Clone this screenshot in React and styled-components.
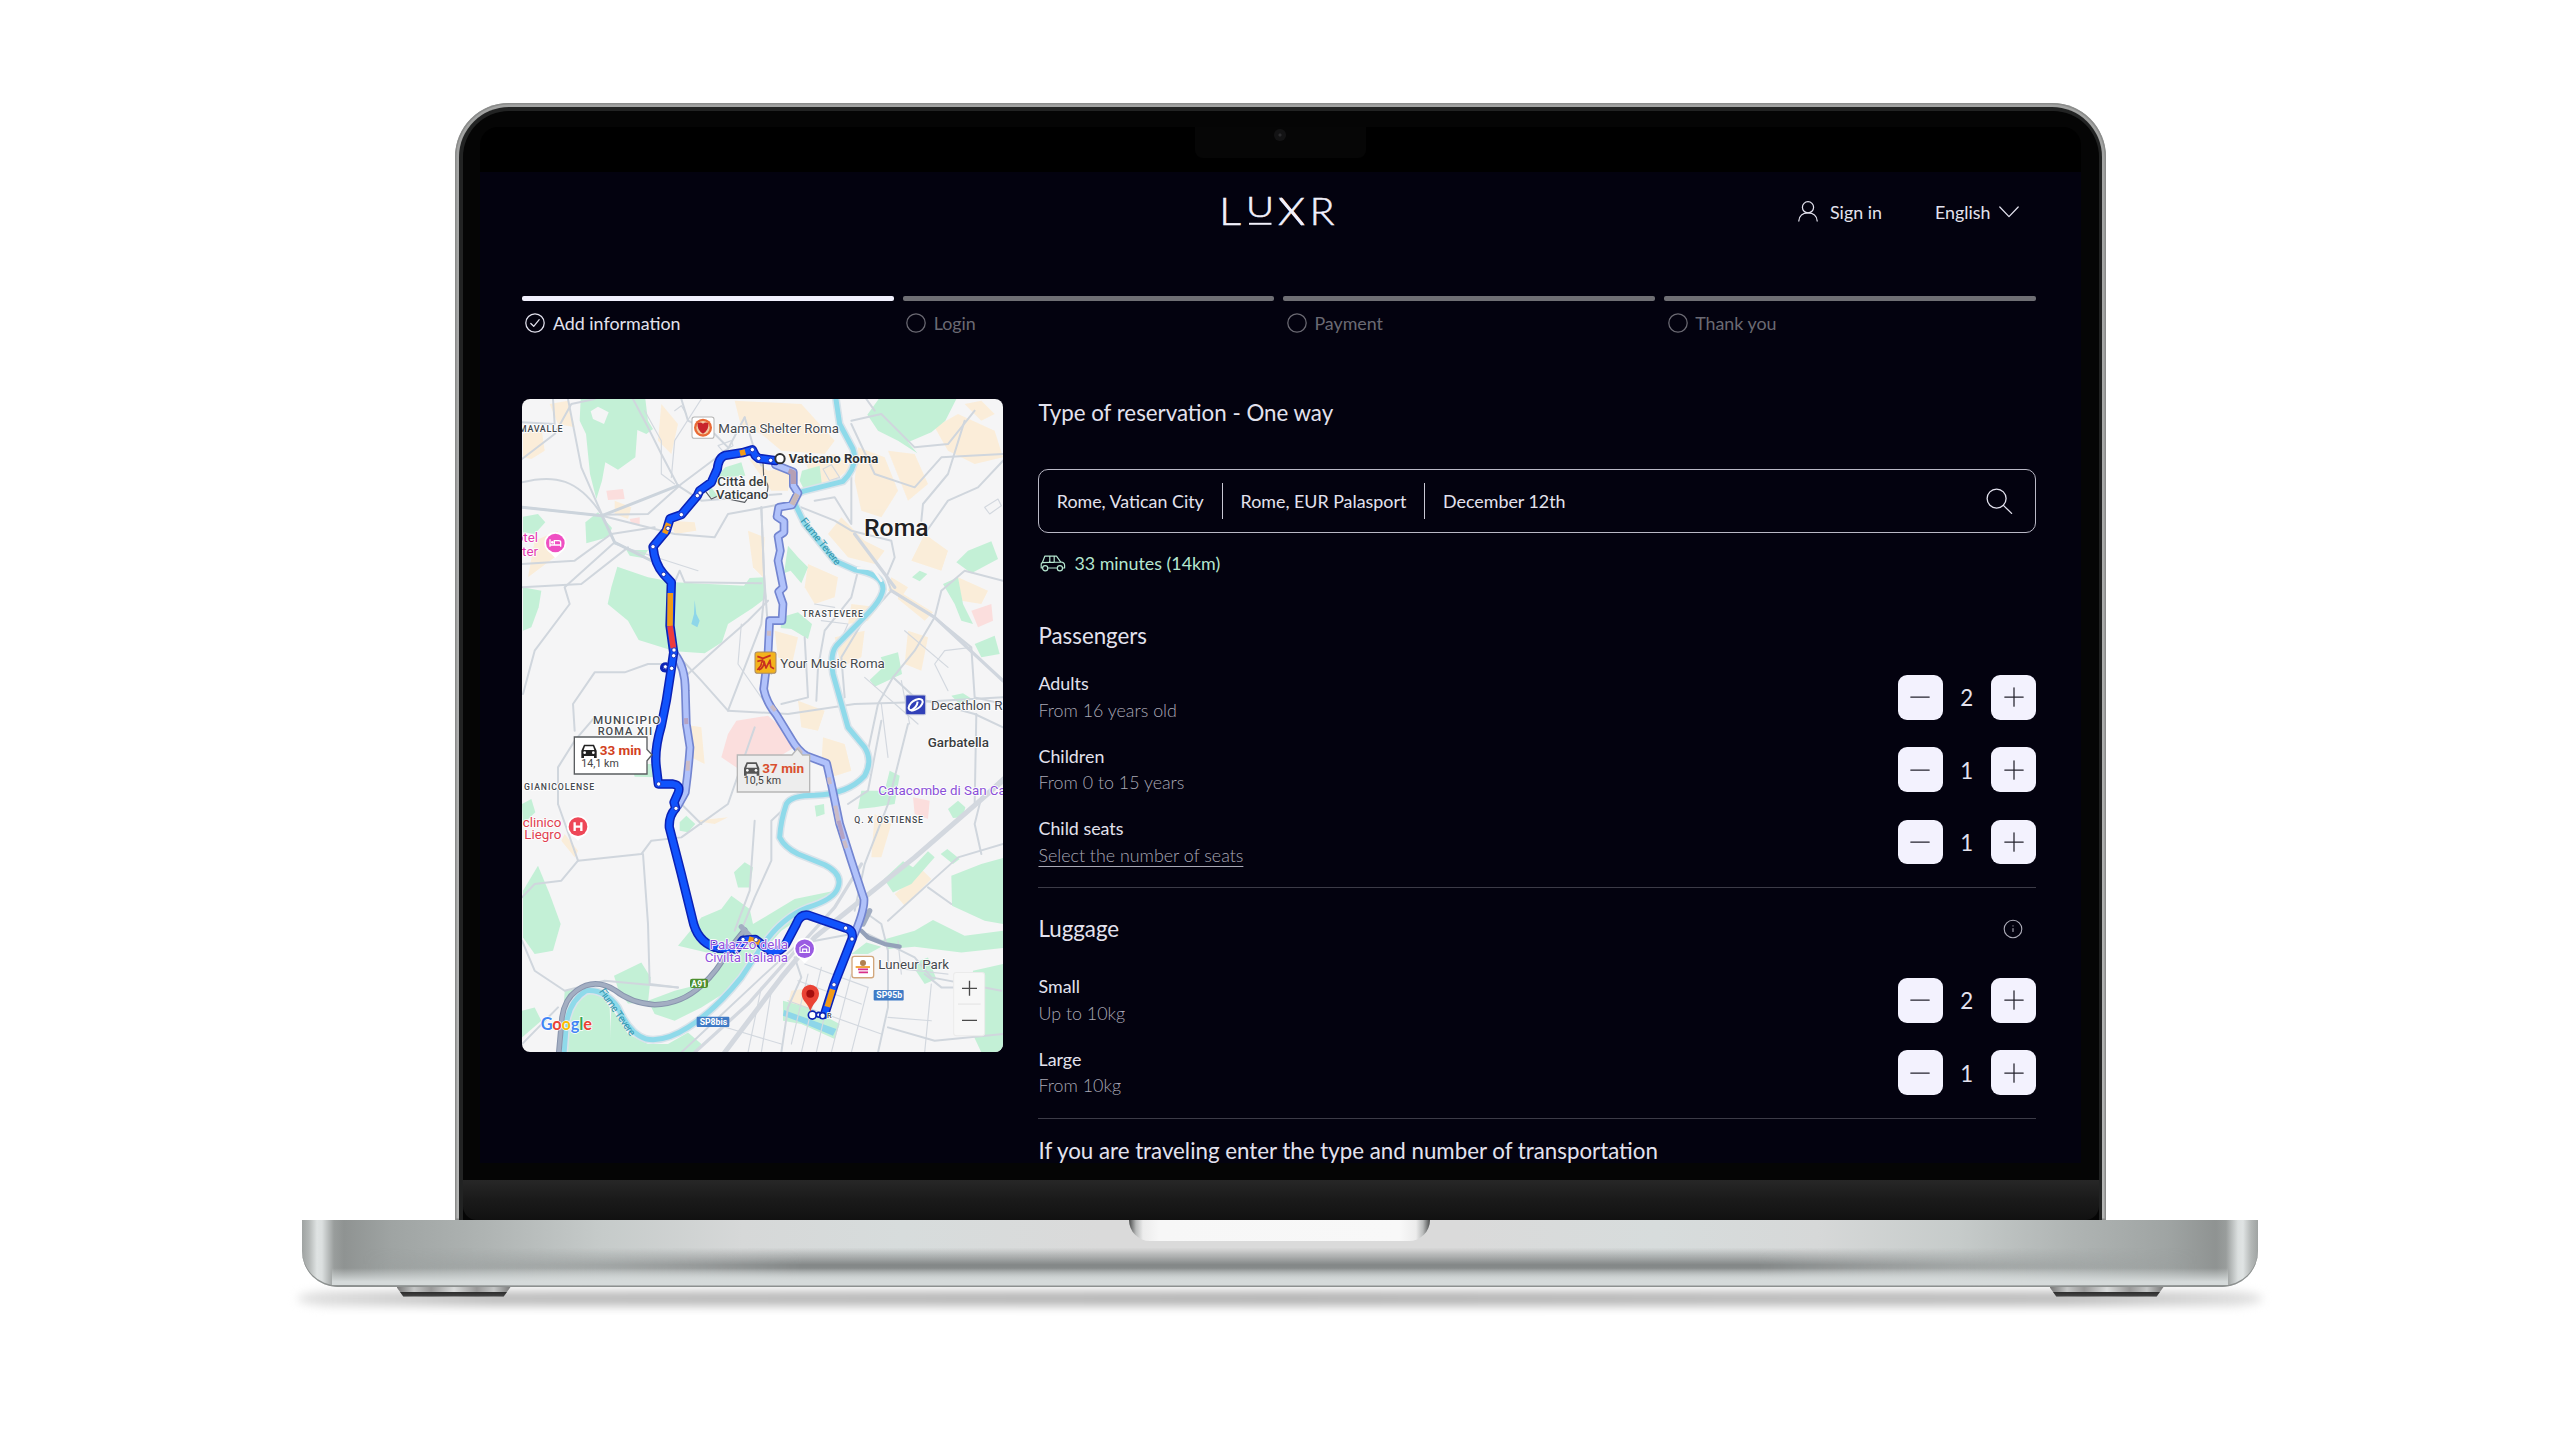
import React from 'react';
import styled, { createGlobalStyle } from 'styled-components';

const GlobalStyle = createGlobalStyle`
  * { box-sizing: border-box; }
  body { margin: 0; background: #fff; overflow: hidden; font-family: Lato, "Liberation Sans", sans-serif; }
  svg { display: block; }
`;

/* ---------- laptop ---------- */
const Stage = styled.div`
  width: 2560px;
  height: 1440px;
  padding-top: 102.5px;
  display: flex;
  flex-direction: column;
  align-items: center;
  background: #fff;
`;
const Lid = styled.div`
  width: 1651px;
  height: 1117.5px;
  margin-left: 1px;
  padding: 4px 4px 0;
  border-radius: 54px 54px 0 0;
  background: linear-gradient(#a2a3a2, #b4b5b4);
  box-shadow: inset 0 0 0 1.5px #8b8c8b;
`;
const LidRing = styled.div`
  height: 100%;
  padding: 4.5px 3.5px 0;
  border-radius: 50px 50px 0 0;
  background: #222323;
`;
const Bezel = styled.div`
  height: 100%;
  padding: 15.5px 17.5px 0;
  border-radius: 46px 46px 0 0;
  background: #050505;
  display: flex;
  flex-direction: column;
`;
const MenuBand = styled.div`
  height: 45.5px;
  flex: none;
  background: #000;
  border-radius: 18px 18px 0 0;
  display: flex;
  justify-content: center;
`;
const Notch = styled.div`
  width: 171px;
  height: 31px;
  margin-right: 1px;
  background: #060606;
  border-radius: 0 0 8px 8px;
  display: flex;
  justify-content: center;
`;
const Camera = styled.div`
  width: 12px;
  height: 12px;
  margin-top: 2px;
  border-radius: 50%;
  background: radial-gradient(circle, #2c2c2e 0 1px, #131314 2px);
`;
const Hinge = styled.div`
  flex: none;
  height: 40.5px;
  margin: 16.5px -17.5px 0;
  background: linear-gradient(#272727, #1b1b1b 45%, #111);
  border-radius: 0 0 14px 14px;
`;
const Base = styled.div`
  position: relative;
  z-index: 1;
  width: 1956px;
  height: 67px;
  border-radius: 0 0 36px 36px;
  overflow: hidden;
  display: flex;
  justify-content: center;
  background: linear-gradient(90deg,
    #9fa3a2 0, #b4b8b7 7px, #dfe3e3 15px, #dbdfdf 20px, #999d9c 32px, #8f9392 42px, #9fa4a3 90px,
    #b0b5b4 190px, #c6cbca 300px, #d6d8d8 440px, #d7dcdc 600px, #dadada 800px, #dadada 1156px,
    #d7dcdc 1356px, #d6d8d8 1516px, #c6cbca 1656px, #b0b5b4 1766px, #9fa4a3 1866px, #8f9392 1914px,
    #999d9c 1924px, #dbdfdf 1936px, #dfe3e3 1941px, #b4b8b7 1949px, #9fa3a2 1956px);
  box-shadow: inset 0 -1.5px 0 #8c908f;
  &::before {
    content: "";
    position: absolute;
    inset: 0 0 1.5px;
    background: linear-gradient(rgba(131,135,135,0) 42%, #838787 68%, #878b8b 73%, #c2c7c7 88%, #d8dddd 97%, #a5a9a9);
    mask-image: linear-gradient(90deg, transparent 60px, #000 500px, #000 1456px, transparent 1896px);
  }
  &::after {
    content: "";
    position: absolute;
    inset: 0 30px 2px;
    background: linear-gradient(rgba(218,222,222,0) 74%, #d5dada 95%);
  }
`;
const ThumbNotch = styled.div`
  position: relative;
  width: 301px;
  height: 21px;
  margin-right: 1px;
  border-radius: 0 0 24px 24px;
  background: linear-gradient(90deg, #4a4c4c 0, #b9bbbb 7px, #ececec 14px, #f7f7f7 30px, #f8f8f8 271px, #ececec 287px, #b9bbbb 294px, #4a4c4c);
`;
const Feet = styled.div`
  position: relative;
  z-index: 2;
  width: 1767px;
  display: flex;
  justify-content: space-between;
`;
const Foot = styled.div`
  width: 114px;
  height: 9.5px;
  clip-path: polygon(0 0, 100% 0, 94% 100%, 6% 100%);
  background:
    linear-gradient(transparent 45%, #2a2a2a 46%, #484848),
    linear-gradient(90deg, #777, #c4c6c6 15%, #999 30%, #d9dbdb 50%, #999 70%, #c4c6c6 85%, #777);
`;
const FloorShadow = styled.div`
  width: 1966px;
  height: 15px;
  margin-top: -6px;
  border-radius: 40px/8px;
  background: linear-gradient(90deg, #e2e2e2, #bdbdbd 10%, #b3b3b3 50%, #bdbdbd 90%, #e2e2e2);
  filter: blur(5px);
`;

/* ---------- page ---------- */
const Page = styled.main`
  flex: 1;
  min-height: 0;
  overflow: hidden;
  padding: 0 45.1px 0 41.9px;
  background: #03020f;
  color: #e3e2ee;
  font-size: 17.85px;
`;
const Header = styled.header`
  height: 78.8px;
  display: grid;
  grid-template-columns: 1fr 112px 1fr;
  align-items: center;
`;
const LogoSlot = styled.div`
  grid-column: 2;
  margin: 1px 0 0 -1.5px;
`;
const Nav = styled.nav`
  display: flex;
  justify-content: flex-end;
  align-items: center;
  padding: 1px 17px 0 0;
  gap: 53px;
`;
const NavItem = styled.a`
  display: flex;
  align-items: center;
  gap: ${p => p.$gap}px;
`;
const Progress = styled.ol`
  list-style: none;
  margin: 44.9px 0 0;
  padding: 0;
  display: grid;
  grid-template-columns: repeat(4, 1fr);
  gap: 9px;
`;
const ProgressStep = styled.li`
  color: ${p => (p.$active ? '#e3e2ee' : '#6b6a73')};
  &::before {
    content: "";
    display: block;
    height: 5.6px;
    border-radius: 2px;
    background: ${p => (p.$active ? '#f1f0fd' : '#6f6f74')};
  }
`;
const StepLabel = styled.div`
  height: 24px;
  margin-top: 9.2px;
  padding: 1.6px 0 0 3.5px;
  display: flex;
  align-items: center;
  gap: 7.5px;
`;
const Body = styled.div`
  margin-top: 63.8px;
  display: flex;
  align-items: flex-start;
  gap: 35px;
`;
const MapCard = styled.div`
  flex: none;
  width: 481px;
  height: 653.4px;
  margin-top: 0.4px;
  border-radius: 8px;
  overflow: hidden;
`;
const Form = styled.section`
  flex: 1;
  min-width: 0;
  display: flex;
  flex-direction: column;
`;
const Heading = styled.h2`
  margin: ${p => p.$top || 0}px 0 0;
  height: 28px;
  line-height: 28px;
  font-size: 22.3px;
  font-weight: 400;
  white-space: nowrap;
  display: flex;
  justify-content: space-between;
  align-items: center;
  padding: 1.8px 12.5px 0 0.6px;
`;
const SearchBar = styled.div`
  height: 64.6px;
  margin-top: 42.6px;
  padding: 0 21.5px 0 0;
  border: 1.3px solid #b9b8c5;
  border-radius: 10px;
  display: flex;
  align-items: center;
`;
const SearchField = styled.span`
  height: 36px;
  padding: 0 17.9px;
  line-height: 36px;
  white-space: nowrap;
  & + & { border-left: 1.2px solid #c9c8d4; }
`;
const SearchIcon = styled.span`
  margin-left: auto;
`;
const Estimate = styled.div`
  height: 24px;
  margin-top: 17.6px;
  padding-left: 2px;
  display: flex;
  align-items: center;
  gap: 8.5px;
  color: #b5e6cf;
`;
const CounterList = styled.div`
  margin-top: ${p => p.$top}px;
  padding: 0 0 19.3px 0.6px;
  border-bottom: 1.2px solid #3c3b47;
  display: grid;
  gap: 18.9px;
`;
const CounterRow = styled.div`
  height: 53.4px;
  display: flex;
  justify-content: space-between;
  align-items: center;
`;
const RowText = styled.div`
  padding-top: 1.2px;
`;
const RowTitle = styled.div`
  line-height: 26.7px;
`;
const RowHint = styled.div`
  line-height: 26.7px;
  font-weight: 300;
  color: #a9a8b5;
  text-decoration: ${p => (p.$link ? 'underline' : 'none')};
  text-decoration-thickness: 1.1px;
  text-underline-offset: 4px;
  text-decoration-skip-ink: none;
`;
const Counter = styled.div`
  display: flex;
  align-items: center;
  margin-top: 2px;
`;
const CounterButton = styled.button`
  width: 44.8px;
  height: 44.8px;
  padding: 0;
  border: 0;
  border-radius: 9px;
  background: #f3f2fe;
  display: grid;
  place-items: center;
`;
const CounterValue = styled.span`
  width: 48.6px;
  padding-top: 2px;
  text-align: center;
  font-size: 22.3px;
  line-height: 28px;
`;

/* ---------- icons ---------- */
const Icon = ({ w, h, children, sw = 1.25 }) => (
  <svg width={w} height={h} viewBox={`0 0 ${w} ${h}`} fill="none" stroke="currentColor" strokeWidth={sw} strokeLinecap="round" strokeLinejoin="round">{children}</svg>
);
const UserIcon = () => (
  <Icon w={20} h={21}><circle cx="10" cy="6.3" r="5.6" /><path d="M.8 20c.3-5 4-8.2 9.2-8.2s8.9 3.200 9.200 8.200" /></Icon>
);
const ChevronIcon = () => <Icon w={20} h={12}><path d="M.8 1 10 10.600 19.200 1" /></Icon>;
const StepIcon = ({ done }) => (
  <Icon w={20} h={20}><circle cx="10" cy="10" r="9.200" />{done && <path d="M5.800 10.500 8.700 13.300 14.200 6.700" />}</Icon>
);
const MagnifierIcon = () => <Icon w={27} h={27} sw={1.3}><circle cx="10.600" cy="10.600" r="9.500" /><path d="M17.400 17.400 25.600 25.400" /></Icon>;
const InfoSlot = styled.span`
  color: #aeadb9;
`;
const InfoIcon = () => (
  <InfoSlot>
    <Icon w={20} h={20} sw={1.1}><circle cx="10" cy="10" r="8.800" /><path d="M10 9.500v3M10 6.800v.2" /></Icon>
  </InfoSlot>
);
const CarIcon = () => (
  <Icon w={26} h={17} sw={1.2}>
    <path d="M2.200 8 4.800 1.200H16.500L20.600 6.800C23.300 7.100 24.600 8.300 24.600 10.200V13H22.800M17 13H7.800M2.600 13H1.200V9.200Q1.200 8 2.400 7.600L20.600 7M9.800 1.200V7.400M14.200 1.200V7.300" />
    <circle cx="5.200" cy="13.200" r="2.600" /><circle cx="19.900" cy="13.200" r="2.600" />
  </Icon>
);
const MinusIcon = () => <Icon w={20} h={20}><path d="M.8 10H19.200" stroke="#24232e" /></Icon>;
const PlusIcon = () => <Icon w={20} h={20}><path d="M.8 10H19.200M10 .8V19.200" stroke="#24232e" /></Icon>;

const WordmarkSvg = styled.svg`
  overflow: visible;
`;
const Wordmark = () => (
  <WordmarkSvg width="114" height="30" viewBox="0 0 114 30" fill="#f1f0fb" stroke="#f1f0fb" strokeWidth=".5" fontFamily="Lato, sans-serif" fontWeight="300">
    <text x="-2" y="28" fontSize="37.500" textLength="22" lengthAdjust="spacingAndGlyphs">L</text>
    <text x="25" y="20.400" fontSize="27" textLength="28" lengthAdjust="spacingAndGlyphs">U</text>
    <rect x="28" y="25.800" width="22.500" height="2" stroke="none" />
    <text x="57" y="28" fontSize="37.500" textLength="27" lengthAdjust="spacingAndGlyphs">X</text>
    <path d="M59.500 1.500 81.500 27.500" strokeWidth="3" />
    <text x="88.500" y="28" fontSize="37.500" textLength="25" lengthAdjust="spacingAndGlyphs">R</text>
  </WordmarkSvg>
);

/* ---------- map ---------- */
const PARKS = [
  'M198 25H392L400 90 415 115 395 130 368 118 362 200 310 237 272 215 262 270 245 325 226 250 214 130 195 90Z',
  'M1092 25H1325L1292 90 1250 125 1180 155 1208 188 1150 150 1090 120 1058 72Z',
  'M308 528 400 560 480 575 688 585 705 562 748 560 756 620 714 652 640 700 622 755 570 788 480 782 372 748 340 690 279 640 290 590Z',
  'M25 378 70 370 92 395 60 430 25 425Z', 'M212 395 250 365 292 412 280 440 215 458Z',
  'M335 478H400L385 502 345 495Z', 'M632 230 680 215 692 255 600 262Z', 'M582 280 612 320 585 320Z',
  'M862 240 915 225 922 285 870 300 855 270Z', 'M820 465 850 500 880 530 860 578 828 540 808 548Z',
  'M1325 515 1360 480 1430 452 1450 505 1370 548Z', 'M1192 560 1215 540 1238 550 1215 572Z',
  'M25 590 80 600 72 650 50 710 25 720Z', 'M800 680 850 665 892 700 880 745 830 715 798 712Z',
  'M1285 580 1330 560 1345 640 1375 700 1340 690 1320 640Z', 'M1380 760 1440 735 1455 790 1400 800Z',
  'M1065 868 1110 825 1098 800 1150 785 1162 850 1080 888Z', 'M1310 915 1345 908 1372 925 1340 945Z',
  'M350 1120H430V1160L360 1158Z', 'M22 1240 50 1225 62 1265 25 1300Z', 'M495 1295 515 1275 542 1300 520 1325 495 1320Z',
  'M900 1245 928 1240 930 1270 905 1278Z', 'M1125 1140 1155 1155 1140 1240 1080 1250 1030 1255 1040 1200 1110 1200Z',
  'M1300 1255 1330 1230 1352 1250 1345 1280 1315 1282Z', 'M658 1445 690 1415 715 1430 705 1490 670 1490Z',
  'M1108 1465 1165 1412 1195 1430 1240 1382 1260 1400 1190 1480 1135 1505Z', 'M1278 1390 1298 1375 1335 1405 1315 1420Z',
  'M1310 1455 1400 1420 1465 1402V1600L1410 1590 1312 1545Z', 'M25 1500 70 1425 105 1510 138 1600 115 1680 60 1690 25 1640Z',
  'M490 1665 560 1580 620 1555 650 1515 705 1555 715 1600 840 1525 960 1500 900 1555 800 1620 730 1700 640 1800 560 1850 480 1890 420 1870 400 1830 480 1800 560 1780 640 1700Z',
  'M298 1755 380 1715 408 1760 400 1835 340 1838 312 1800Z', 'M22 1860 60 1850 80 1890 22 1940Z',
  'M150 1800 240 1788 285 1850 290 1985H140Z', 'M1095 1650 1200 1620 1255 1588 1350 1635 1465 1620V1672L1340 1685 1200 1668 1120 1675Z',
  'M290 1850 340 1930 400 1960 460 1960 520 1925 560 1960 540 1985H285Z',
  'M805 1830 880 1850 975 1900 960 1945 860 1900 805 1890Z', 'M1375 1740 1465 1720V1985H1400L1360 1900Z',
  'M1010 1690 1055 1655 1100 1668 1060 1690Z', 'M1190 1720 1240 1700 1265 1765 1230 1780Z',
];
const URBAN = [
  'M25 130 80 110 90 180 50 205 25 200Z', 'M105 40 160 30 180 110 130 100Z', 'M440 40 490 100 470 190 430 150Z',
  'M660 30 860 40 960 150 930 190 800 180 740 130 680 110Z', 'M700 200 760 240 830 230 820 300 770 300Z',
  'M870 210 960 190 1010 230 960 270 900 280Z', 'M1030 170 1110 200 1150 300 1100 380 1040 360 1020 270Z',
  'M1120 180 1200 190 1240 280 1180 330Z', 'M1260 110 1330 70 1440 120 1465 200 1380 220 1300 180Z',
  'M1350 40 1400 30 1440 70 1400 90Z', 'M980 380 1050 450 1110 480 1080 520 1000 500 940 430Z',
  'M1150 600 1255 665 1230 690 1150 625Z', 'M1230 430 1300 480 1280 540 1190 510Z', 'M1130 560 1180 590 1160 620 1120 600Z',
  'M880 520 970 560 960 620 900 640 870 590Z', 'M960 740 1050 720 1040 800 980 830Z', 'M300 330 350 350 340 385 300 370Z',
  'M470 390 540 395 545 420 480 430Z', 'M60 450 130 420 120 500 40 560Z', 'M700 420 750 440 745 560 715 530Z',
  'M780 720 850 740 830 830 790 800Z', 'M1330 560 1420 600 1400 640 1340 630Z', 'M1180 720 1240 740 1220 840 1170 820Z',
  'M925 1040 990 1060 1010 1140 950 1160 920 1120Z', 'M850 930 930 960 910 1020 860 1010Z', 'M1080 1270 1130 1300 1100 1400 1070 1400Z',
  'M1140 1510 1225 1440 1250 1465 1170 1545Z', 'M830 1800 890 1790 880 1850 820 1840Z', 'M540 1290 640 1280 600 1300Z',
  'M500 1000 560 1010 570 1120 530 1100Z', 'M150 1330 190 1380 180 1400 140 1350Z', 'M1010 640 1090 650 1060 690 1000 700Z',
];
const MEDICAL = [
  'M665 990 760 975 800 1010 840 1070 790 1100 680 1140 620 1100 640 1030Z', 'M1370 660 1430 640 1435 690 1390 710Z',
  'M1195 1220 1245 1230 1240 1285 1200 1270Z', 'M275 300 325 295 330 325 280 328Z', 'M345 385 375 380 375 400 350 400Z',
];
const ROADS = [
  'M22 275C120 250 190 265 260 370L300 455 430 520', 'M115 25 120 100 22 95', 'M22 205 120 130 170 40 240 25',
  'M160 25 200 230 262 372', 'M262 372 400 370 500 280 640 175 690 80', 'M490 285 440 190 400 110 355 25',
  'M490 285 560 330 800 310', 'M22 590 200 580 340 470', 'M22 350 262 375 480 430 600 440 640 370 830 335',
  'M22 520 180 510 290 430 420 410', 'M300 455 150 590 165 640 60 780 25 910', 'M480 575 495 540 510 575 740 578',
  'M495 800 560 870 640 960 740 700 750 600 740 350', 'M520 850 620 760 700 690 760 630', 'M180 1020 175 940 240 845 330 845 400 820 450 820',
  'M640 960 820 970 1020 940 1200 935 1465 920', 'M690 80 720 180 740 225', 'M500 25 520 90 600 130 640 170',
  'M740 350 748 550 770 850', 'M1010 90 1100 70 1200 170 1300 160 1380 60', 'M1010 100 1080 250 1200 290 1280 200 1465 190',
  'M860 350 960 390 1010 420 1130 450 1140 500 1115 560 1130 600', 'M1130 600 1260 680 1370 770 1380 920 1465 940',
  'M1130 600 1040 700 980 800 990 920', 'M1260 680 1280 600 1350 540 1465 570', 'M1260 680 1200 780 1135 860 1090 940 1060 1080',
  'M1135 860 1200 920 1270 940 1380 970 1465 1010', 'M1030 540 1010 620 930 720 910 830 905 930', 'M870 740 880 920 800 940',
  'M1010 260 1010 400 960 320 900 330', 'M1220 390 1225 340 1300 250 1350 90', 'M1465 210 1390 290 1300 330 1230 430',
  'M130 1240 130 1130 180 1050 240 980', 'M130 1240 190 1410 380 1390 410 1350 500 1340 640 1240 720 1010',
  'M22 1520 60 1480 140 1470 190 1410', 'M385 1390 400 1600 405 1780 490 1790', 'M22 1650 60 1740 150 1800 270 1770 490 1790',
  'M500 1240 560 1300', 'M720 1290 705 1500 660 1620', 'M865 1200 770 1290 770 1410 720 1520 680 1620',
  'M1465 1160 1400 1220 1380 1300 1400 1390', 'M1380 1240 1385 970', 'M1045 1560 1100 1600 1120 1680 1120 1850 1090 1985',
  'M1120 1590 1230 1490 1330 1400 1465 1360', 'M1240 1490 1310 1540', 'M1230 1750 1280 1790 1330 1790', 'M1120 1910 1260 1950 1465 1930',
  'M22 1960 130 1850', 'M500 1985 740 1760 850 1660 1010 1630', 'M1060 1630 1200 1700 1250 1760 1460 1800',
  'M1055 25 1080 60', 'M840 1700 860 1760 820 1850 800 1985', 'M1180 1000 1120 1240 1050 1420 1020 1560', 'M1100 990 1060 1200 1000 1240',
];
const STREETS = [
  'M870 1720 1060 1790', 'M850 1770 1040 1840', 'M880 1750 830 1960', 'M920 1730 860 1985', 'M960 1740 905 1985', 'M1010 1750 950 1985',
  'M1060 1790 1010 1985', 'M820 1830 1100 1930', 'M1120 1730 1300 1750', 'M1120 1880 1250 1890', 'M1250 1780 1230 1985',
  'M740 1790 700 1985', 'M770 1800 740 1985', 'M600 1900 800 1960', 'M480 60 500 45 515 70', 'M610 165 650 150 655 165 625 182Z',
  'M925 235 950 222 975 260 945 270Z', 'M1410 350 1450 325 1460 345 1425 370Z', 'M560 25 480 150 470 260', 'M390 60 440 150 440 250 480 280',
  'M920 690 1000 700 950 810', 'M1170 720 1300 830', 'M1050 860 1210 1000', 'M1160 870 1185 1000', 'M1100 940 1120 1100',
  'M900 640 960 650', 'M300 460 550 540', 'M680 700 670 820 760 950', 'M1370 770 1290 780 1260 820 1300 900', 'M1150 1650 1160 1750',
];
const RIVER = 'M963 20 975 100 1015 175Q1032 225 985 272L865 302Q840 310 842 342L870 400 960 510 1020 537Q1105 550 1105 595C1100 640 1040 685 965 765Q945 790 955 850L1000 1010 1050 1070Q1075 1110 1050 1155 1000 1210 900 1214 830 1214 815 1240 798 1290 795 1340 810 1370 850 1390L930 1422Q985 1450 970 1490 960 1525 880 1550 800 1580 740 1670L680 1760Q600 1860 520 1910 450 1955 395 1945 345 1930 310 1850 270 1795 215 1800 165 1830 155 1900L148 1990';
const MAIN = 'M782 210 732 203 722 195 713 177 683 186 632 194 Q612 200 608 235L590 275 555 300 548 315 500 372 466 384 455 420 415 468Q420 520 447 550L470 575 466 705 477 785 470 833 455 930 440 1005Q418 1080 425 1130L431 1180H475Q500 1184 490 1208L478 1235 483 1253Q462 1275 464 1310L500 1450 537 1600Q555 1660 613 1673L665 1675 685 1648 722 1646 765 1680Q795 1688 812 1662L845 1600Q855 1570 880 1573L993 1612Q1018 1618 1012 1645L958 1782 930 1870';
const ALT_A = 'M782 222 836 244 836 285 850 307 832 343 792 350 787 378 808 392V425L790 437 797 480 790 510 806 590 792 603 805 640 802 690H765L760 790 747 895Q755 935 785 972L830 1045Q850 1080 875 1095L936 1118 950 1180 975 1300 1010 1410 1048 1525Q1050 1560 1015 1640';
const ALT_B = 'M480 790Q512 830 512 900L515 1000 526 1070Q522 1130 512 1205L490 1245';
const STOPS = [[768, 209], [732, 203], [713, 177], [556, 307], [548, 315], [500, 372], [460, 413], [415, 468], [447, 551], [478, 778], [477, 795], [471, 833], [432, 1180], [484, 1253], [613, 1673], [665, 1675], [685, 1646], [724, 1647], [993, 1612], [1012, 1645], [958, 1782]];
const MOTORWAY = 'M132 1990 142 1880Q150 1825 185 1800 240 1760 300 1798 350 1838 420 1842 500 1840 560 1785 610 1740 640 1680L690 1618';

const Halo = styled.text`
  font-family: Roboto, sans-serif;
  font-size: ${p => p.$size || 40}px;
  font-weight: ${p => p.$weight || 400};
  fill: ${p => p.$color || '#45494e'};
  letter-spacing: ${p => p.$track || 0}px;
  paint-order: stroke;
  stroke: ${p => (p.$plain ? 'none' : '#ffffff')};
  stroke-width: 5px;
  stroke-linejoin: round;
`;
const Tail = styled(Halo).attrs({ textAnchor: 'end' })``;

const CarGlyph = ({ x, y, color }) => (
  <g transform={`translate(${x} ${y})`} fill={color}>
    <path d="M8 2H38L46 20V42H38V36H8V42H0V20ZM11 7 7 18H39L35 7Z" fillRule="evenodd" />
    <circle cx="10" cy="26" r="4" fill="#fff" /><circle cx="36" cy="26" r="4" fill="#fff" />
  </g>
);

const RouteMap = () => (
  <svg width="481" height="653.400" viewBox="22 25 1443 1960" preserveAspectRatio="none">
    <rect x="22" y="25" width="1443" height="1960" fill="#f5f5f6" />
    <g fill="#fcecd4" opacity=".85">{URBAN.map(d => <path key={d} d={d} />)}</g>
    <g fill="#fbdedd">{MEDICAL.map(d => <path key={d} d={d} />)}</g>
    <g fill="#c3f0d6" strokeLinejoin="round">{PARKS.map(d => <path key={d} d={d} />)}</g>
    <path d="M228 62 250 48 282 65 268 100 235 85Z" fill="#f5f5f6" />
    <path d="M540 628 545 670 555 690 548 710 530 700 538 670Z" fill="#8ed6e9" />
    <path d="M808 1858 870 1880 965 1915 955 1935 860 1895 805 1875Z" fill="#8ed6e9" />
    <g fill="none" stroke="#d3d8df" strokeLinecap="round" strokeLinejoin="round">
      <g strokeWidth="3.500">{STREETS.map(d => <path key={d} d={d} />)}</g>
      <g strokeWidth="6" stroke="#d0d6dd">{ROADS.map(d => <path key={d} d={d} />)}</g>
      <path d="M22 350 262 375 300 455 430 520M490 285 262 375" strokeWidth="9" stroke="#ccd4dc" />
      <path d="M630 1985 800 1760 900 1640 1000 1560 1200 1400 1465 1170" strokeWidth="15" stroke="#d3d8df" />
      <path d="M540 1985 700 1840 860 1660 960 1550 1040 1420" strokeWidth="10" stroke="#d3d8df" />
      <path d="M1020 430 1140 590M1130 600 1260 680 1465 870" strokeWidth="10" stroke="#d0d6de" />
      <path d={RIVER} stroke="#d9e3ea" strokeWidth="24" />
      <path d={RIVER} stroke="#8fdaea" strokeWidth="15" />
      <path d="M1030 532 1075 535 1100 570" stroke="#f5f5f6" strokeWidth="8" />
      <path d={MOTORWAY} stroke="#8794ad" strokeWidth="17" />
      <path d={MOTORWAY} stroke="#a3aec2" strokeWidth="11" />
      <path d="M1040 1620 1060 1640 1110 1660 1155 1668" stroke="#94a1b9" strokeWidth="13" />
      <path d="M680 1608 705 1635M1045 1600 1065 1560" stroke="#a3aec2" strokeWidth="16" />
      <path d="M745 215 747 255M750 270Q765 280 757 305M575 305 590 325 605 318M640 325 690 335 700 322" stroke="#5b5f64" strokeWidth="3.500" />
    </g>
    <g fill="none" strokeLinecap="round" strokeLinejoin="round">
      <path d={ALT_A} stroke="#7385d0" strokeWidth="26" /><path d={ALT_B} stroke="#7385d0" strokeWidth="26" />
      <path d={ALT_A} stroke="#b1c2fa" strokeWidth="16" /><path d={ALT_B} stroke="#b1c2fa" strokeWidth="16" />
      <g strokeLinecap="butt" strokeWidth="12">
        <path d="M822 240 836 246V280" stroke="#b59fb5" strokeWidth="16" /><path d="M848 310 832 342" stroke="#c9b8b8" strokeWidth="16" />
        <path d="M763 720V735M770 945 782 960M942 1160 946 1180M962 1245 972 1300M988 1350 995 1372M520 1110 519 1140M848 1070 860 1088" stroke="#cbbcc6" />
        <path d="M972 1290 986 1345M514 982 515 1000" stroke="#b5a3c4" />
      </g>
      <path d={MAIN} stroke="#0b22b5" strokeWidth="28" /><path d="M455 820Q440 820 441 832 444 845 468 838" stroke="#0b22b5" strokeWidth="10" />
      <path d={MAIN} stroke="#1153fc" strokeWidth="19" />
      <g strokeLinecap="butt" strokeWidth="17" stroke="#f29a18">
        <path d="M676 188 692 184M462 398 450 428M467 607 466 706M954 1796 938 1848M702 1645 735 1655" />
        <path d="M466 706 476 772" stroke="#ee3c3c" />
      </g>
    </g>
    <g fill="#fff" stroke="#0b22b5" strokeWidth="2.500">{STOPS.map(([x, y]) => <circle key={`${x}-${y}`} cx={x} cy={y} r="6.500" />)}<circle cx="452" cy="828" r="6" /></g>
    <g fill="#fff" stroke="#0b22b5" strokeWidth="5"><circle cx="893" cy="1873" r="12" /><circle cx="912" cy="1872" r="7" /><circle cx="924" cy="1875" r="9" /></g>
    <circle cx="796" cy="204" r="14" fill="#fff" stroke="#2d2f31" strokeWidth="6" />

    <rect x="532" y="79" width="66" height="64" rx="7" fill="#fff" stroke="#b3b3b3" strokeWidth="3" />
    <circle cx="565" cy="111" r="27" fill="#e96a35" /><circle cx="565" cy="111" r="20" fill="#f3c9a0" />
    <path d="M549 98Q557 92 565 99 573 92 581 98 584 118 565 129 546 118 549 98Z" fill="#c8242b" />
    <rect x="721" y="784" width="63" height="64" rx="7" fill="#f3b31d" stroke="#a98a65" strokeWidth="3" />
    <path d="M728 797 745 803 768 794M728 812 744 808 738 826 728 838M733 838Q748 832 748 812L754 832 766 808 768 828 778 834" fill="none" stroke="#c9301f" strokeWidth="5" strokeLinejoin="round" />
    <rect x="1173" y="913" width="60" height="59" rx="4" fill="#3140b8" stroke="#c3c7dc" strokeWidth="3" />
    <g transform="translate(1203 942) rotate(-35)" fill="none" stroke="#fff" strokeWidth="6"><ellipse rx="24" ry="13" /><path d="M-22 6Q-2 10 10-4" /></g>
    <rect x="1012" y="1697" width="65" height="64" rx="7" fill="#fff" stroke="#d2a77c" strokeWidth="4" />
    <circle cx="1045" cy="1717" r="9" fill="#b08050" /><path d="M1023 1729H1066" stroke="#f2a33c" strokeWidth="6" /><path d="M1030 1736H1060M1032 1745H1060" stroke="#d8308a" strokeWidth="5" />

    <g><path d="M100 480 122 502 144 480Z" fill="#fff" /><circle cx="122" cy="457" r="33" fill="#fff" /><circle cx="122" cy="457" r="28" fill="#ef4fc2" />
      <path d="M106 446V468M106 463H138V468M138 463V455Q138 450 132 450H119V463" fill="none" stroke="#fff" strokeWidth="4" /><circle cx="113" cy="455" r="4" fill="#fff" /></g>
    <g><path d="M168 1328 190 1350 212 1328Z" fill="#fff" /><circle cx="190" cy="1308" r="33" fill="#fff" /><circle cx="190" cy="1308" r="28" fill="#ee4757" />
      <path d="M180 1295V1321M200 1295V1321M180 1308H200" stroke="#fff" strokeWidth="7" /></g>
    <g><path d="M848 1695 870 1718 892 1695Z" fill="#fff" /><circle cx="870" cy="1674" r="33" fill="#fff" /><circle cx="870" cy="1674" r="28" fill="#9a5be2" />
      <path d="M856 1670 870 1661 884 1670V1685H856ZM864 1684V1675H876V1684" fill="none" stroke="#fff" strokeWidth="3.500" /></g>
    <path d="M887 1864C883 1838 861 1832 861 1808A26 26 0 0 1 913 1808C913 1832 891 1838 887 1864Z" fill="#ea4335" /><circle cx="887" cy="1809" r="12" fill="#a50e0e" />

    <Tail x="146" y="123" $size={27} $weight={500} $track={2}>MAVALLE</Tail>
    <Halo x="611" y="126">Mama Shelter Roma</Halo>
    <Halo x="822" y="217" $size={39.5} $weight={700} $color="#2f3235">Vaticano Roma</Halo>
    <Halo x="608" y="286" $weight={500} $color="#3a3d40">Città del</Halo>
    <Halo x="604" y="326" $weight={500} $color="#3a3d40">Vaticano</Halo>
    <Halo x="1048" y="437" $size={74.5} $weight={500} $color="#1f2123">Roma</Halo>
    <Tail x="70" y="453" $color="#e23bb0">otel</Tail>
    <Tail x="70" y="497" $color="#e23bb0">ter</Tail>
    <Halo x="863" y="679" $size={26} $weight={500} $track={2.6}>TRASTEVERE</Halo>
    <Halo x="797" y="831">Your Music Roma</Halo>
    <Halo x="1249" y="959">Decathlon R</Halo>
    <Halo x="235" y="1000" $size={35} $weight={500} $track={3.1}>MUNICIPIO</Halo>
    <Halo x="249" y="1032" $size={33} $weight={500} $track={3}>ROMA XII</Halo>
    <Halo x="1239" y="1070" $weight={500} $color="#3a3d40">Garbatella</Halo>
    <Halo x="28" y="1197" $size={26} $weight={500} $track={2.7}>GIANICOLENSE</Halo>
    <Halo x="1091" y="1212" $color="#8a4fd8">Catacombe di San Ca</Halo>
    <Halo x="1019" y="1298" $size={26} $weight={500} $track={2.6}>Q. X OSTIENSE</Halo>
    <Tail x="140" y="1308" $color="#e0404f">clinico</Tail>
    <Tail x="140" y="1345" $color="#e0404f">Liegro</Tail>
    <Tail x="820" y="1674" $color="#9252dc">Palazzo della</Tail>
    <Tail x="820" y="1713" $color="#9252dc">Civiltà Italiana</Tail>
    <Halo x="1091" y="1734">Luneur Park</Halo>
    <Halo x="937" y="1882" $size={22} $weight={500}>R</Halo>
    <g transform="translate(856 392) rotate(51)"><Halo $size={31} $color="#2f95ae" $plain textLength="172">Fiume Tevere</Halo></g>
    <g transform="translate(252 1802) rotate(55)"><Halo $size={31} $color="#2f95ae" $plain textLength="166">Fiume Tevere</Halo></g>

    <rect x="526" y="1764" width="54" height="28" rx="7" fill="#4d8f2f" />
    <Halo x="530" y="1788" $size={26} $weight={700} $color="#fff" $plain>A91</Halo>
    <rect x="546" y="1878" width="98" height="31" rx="3" fill="#3f7bc6" />
    <Halo x="555" y="1903" $size={26} $weight={700} $color="#fff" $plain>SP8bis</Halo>
    <rect x="1077" y="1798" width="90" height="31" rx="3" fill="#3f7bc6" />
    <Halo x="1085" y="1823" $size={26} $weight={700} $color="#fff" $plain>SP95b</Halo>

    <path d="M179 1039H397V1076L412 1092 397 1110V1150H179Z" fill="#fff" stroke="#5a5d60" strokeWidth="4" />
    <CarGlyph x={200} y={1060} color="#222" />
    <Halo x="255" y="1094" $size={40.5} $weight={700} $color="#d23f1e" $plain>33 min</Halo>
    <Halo x="200" y="1128" $size={32} $color="#444" $plain>14,1 km</Halo>
    <path d="M668 1093H832L848 1074 864 1093H885V1204H668Z" fill="#ededed" stroke="#b7b7b7" strokeWidth="4" />
    <CarGlyph x={688} y={1113} color="#555" />
    <Halo x="743" y="1147" $size={40.5} $weight={700} $color="#d9502f" $plain>37 min</Halo>
    <Halo x="687" y="1181" $size={32} $color="#444" $plain>10,5 km</Halo>

    <rect x="1317" y="1745" width="93" height="190" rx="8" fill="#f7f7f7" stroke="#ebebeb" strokeWidth="3" />
    <path d="M1330 1840H1398" stroke="#e3e3e3" strokeWidth="3" />
    <path d="M1342 1793H1387M1364.500 1770V1815M1342 1889H1387" stroke="#4a4a4a" strokeWidth="4" />
    <text x="78" y="1917" fontFamily="Lato, sans-serif" fontWeight="700" fontSize="49" textLength="154" stroke="#fff" strokeWidth="4" paintOrder="stroke">
      <tspan fill="#4285f4">G</tspan><tspan fill="#ea4335">o</tspan><tspan fill="#fbbc05">o</tspan><tspan fill="#4285f4">g</tspan><tspan fill="#34a853">l</tspan><tspan fill="#ea4335">e</tspan>
    </text>
  </svg>
);

/* ---------- data ---------- */
const STEPS = ['Add information', 'Login', 'Payment', 'Thank you'];
const PASSENGERS = [
  { title: 'Adults', hint: 'From 16 years old', value: 2 },
  { title: 'Children', hint: 'From 0 to 15 years', value: 1 },
  { title: 'Child seats', hint: 'Select the number of seats', value: 1, link: true },
];
const LUGGAGE = [
  { title: 'Small', hint: 'Up to 10kg', value: 2 },
  { title: 'Large', hint: 'From 10kg', value: 1 },
];

const Counters = ({ items, top }) => (
  <CounterList $top={top}>
    {items.map(item => (
      <CounterRow key={item.title}>
        <RowText>
          <RowTitle>{item.title}</RowTitle>
          <RowHint $link={item.link}>{item.hint}</RowHint>
        </RowText>
        <Counter>
          <CounterButton><MinusIcon /></CounterButton>
          <CounterValue>{item.value}</CounterValue>
          <CounterButton><PlusIcon /></CounterButton>
        </Counter>
      </CounterRow>
    ))}
  </CounterList>
);

export default function App() {
  return (
    <Stage>
      <GlobalStyle />
      <Lid>
        <LidRing>
          <Bezel>
            <MenuBand><Notch><Camera /></Notch></MenuBand>
            <Page>
              <Header>
                <LogoSlot><Wordmark /></LogoSlot>
                <Nav>
                  <NavItem $gap={12.5}><UserIcon />Sign in</NavItem>
                  <NavItem $gap={8.5}>English<ChevronIcon /></NavItem>
                </Nav>
              </Header>
              <Progress>
                {STEPS.map((label, i) => (
                  <ProgressStep key={label} $active={i === 0}>
                    <StepLabel><StepIcon done={i === 0} />{label}</StepLabel>
                  </ProgressStep>
                ))}
              </Progress>
              <Body>
                <MapCard><RouteMap /></MapCard>
                <Form>
                  <Heading>Type of reservation - One way</Heading>
                  <SearchBar>
                    <SearchField>Rome, Vatican City</SearchField>
                    <SearchField>Rome, EUR Palasport</SearchField>
                    <SearchField>December 12th</SearchField>
                    <SearchIcon><MagnifierIcon /></SearchIcon>
                  </SearchBar>
                  <Estimate><CarIcon />33 minutes (14km)</Estimate>
                  <Heading $top={46.3}>Passengers</Heading>
                  <Counters items={PASSENGERS} top={20.3} />
                  <Heading $top={26.5}>Luggage<InfoIcon /></Heading>
                  <Counters items={LUGGAGE} top={30.4} />
                  <Heading $top={17.6}>If you are traveling enter the type and number of transportation</Heading>
                </Form>
              </Body>
            </Page>
            <Hinge />
          </Bezel>
        </LidRing>
      </Lid>
      <Base><ThumbNotch /></Base>
      <Feet><Foot /><Foot /></Feet>
      <FloorShadow />
    </Stage>
  );
}
